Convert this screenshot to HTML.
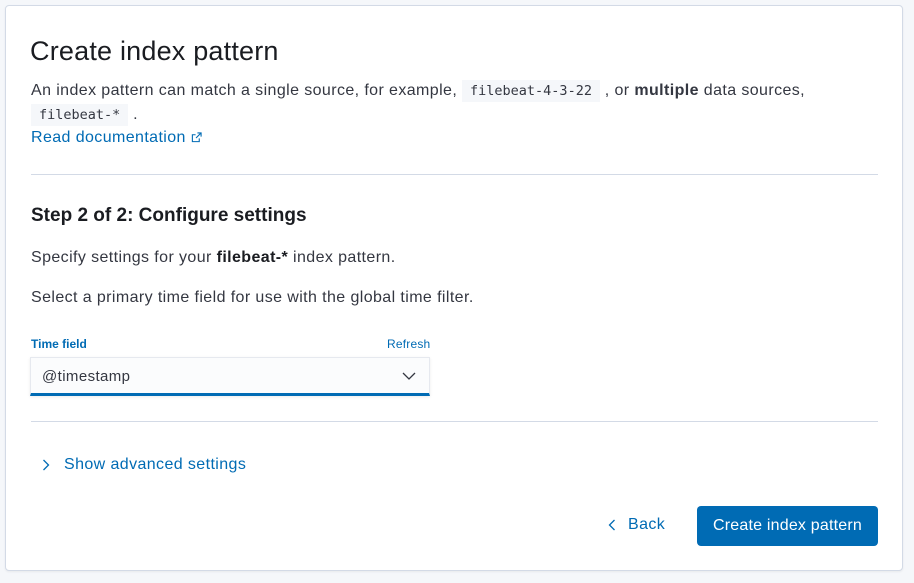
<!DOCTYPE html>
<html><head><style>
*{margin:0;padding:0;box-sizing:border-box}
body{width:914px;height:583px;background:#f5f7fa;font-family:"Liberation Sans","DejaVu Sans",sans-serif;color:#343741;position:relative;overflow:hidden}
.panel{position:absolute;left:5px;top:5px;width:898px;height:566px;background:#fff;border:1px solid #d3dae6;border-radius:4px;box-shadow:0 1px 2px rgba(0,0,0,.06)}
.a{position:absolute;white-space:nowrap}
.t{letter-spacing:0.4px}
code{font-family:"DejaVu Sans Mono",monospace;font-size:13.5px;background:#f5f7fa;padding:3px 8px;color:#343741;letter-spacing:0}
.hr{position:absolute;left:31px;width:847px;height:1px;background:#d3dae6}
.link{color:#006bb4}
</style></head><body>
<div class="panel"></div>
<div class="a" style="left:30px;top:36px;font-size:27px;color:#1a1c21;letter-spacing:0.2px">Create index pattern</div>
<div class="a t" style="left:31px;top:80px;font-size:16px;line-height:22px">An index pattern can match a single source, for example, <code>filebeat-4-3-22</code> , or <b>multiple</b> data sources,</div>
<div class="a t" style="left:31px;top:104px;font-size:16px;line-height:22px"><code>filebeat-*</code> .</div>
<div class="a link t" style="left:31px;top:127px;font-size:16px;line-height:22px">Read documentation <svg width="11" height="11" viewBox="0 0 12 12" style="vertical-align:-1px"><path d="M7 1h4v4M11 1L5.5 6.5M9 7v3.5H1.5V3H5" fill="none" stroke="#006bb4" stroke-width="1.2"/></svg></div>
<div class="hr" style="top:174px"></div>
<div class="a" style="left:31px;top:205px;font-size:19px;font-weight:bold;color:#1a1c21">Step 2 of 2: Configure settings</div>
<div class="a t" style="left:31px;top:249px;font-size:16px">Specify settings for your <b style="color:#1a1c21">filebeat-*</b> index pattern.</div>
<div class="a t" style="left:31px;top:289px;font-size:16px">Select a primary time field for use with the global time filter.</div>
<div class="a" style="left:31px;top:337px;font-size:12px;font-weight:bold;color:#006bb4">Time field</div>
<div class="a link" style="left:387px;top:337px;font-size:12px;letter-spacing:0.2px">Refresh</div>
<div class="a" style="left:30px;top:357px;width:400px;height:39px;background:#fbfcfd;border:1px solid #e6e9ef;border-bottom:3px solid #006bb4;box-shadow:0 1px 3px rgba(0,0,0,.08)"></div>
<div class="a t" style="left:42px;top:368px;font-size:15px">@timestamp</div>
<svg class="a" style="left:402px;top:371px" width="14" height="10" viewBox="0 0 14 10"><path d="M1 2l6 6 6-6" fill="none" stroke="#343741" stroke-width="1.3"/></svg>
<div class="hr" style="top:421px"></div>
<svg class="a" style="left:42px;top:459px" width="8" height="12" viewBox="0 0 8 12"><path d="M1.5 1l5 5-5 5" fill="none" stroke="#006bb4" stroke-width="1.3"/></svg>
<div class="a link t" style="left:64px;top:456px;font-size:16px">Show advanced settings</div>
<svg class="a" style="left:608px;top:519px" width="8" height="12" viewBox="0 0 8 12"><path d="M6.5 1l-5 5 5 5" fill="none" stroke="#006bb4" stroke-width="1.3"/></svg>
<div class="a link t" style="left:628px;top:516px;font-size:16px">Back</div>
<div class="a" style="left:697px;top:506px;width:181px;height:40px;background:#006bb4;border-radius:4px;color:#fff;font-size:16px;line-height:40px;text-align:center;letter-spacing:0.2px">Create index pattern</div>
</body></html>
